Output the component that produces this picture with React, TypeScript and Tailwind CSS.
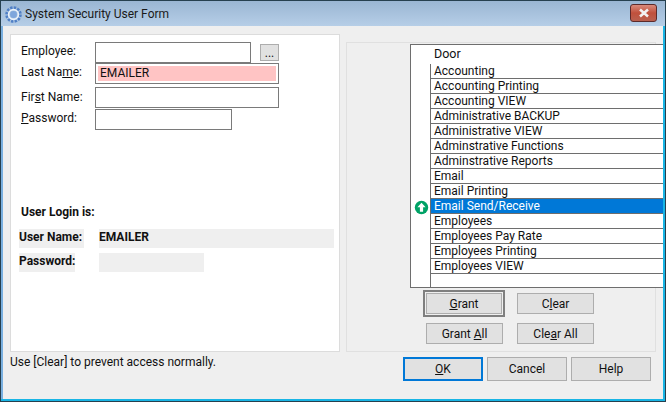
const doors = [
  "Accounting", "Accounting Printing", "Accounting VIEW", "Administrative BACKUP",
  "Administrative VIEW", "Adminstrative Functions", "Adminstrative Reports", "Email",
  "Email Printing", "Email Send/Receive", "Employees", "Employees Pay Rate",
  "Employees Printing", "Employees VIEW",
];

const Gear = () => (
  <svg width="17" height="17" viewBox="0 0 16 16">
    <circle cx="8" cy="8" r="6.3" fill="none" stroke="#4f7fc6" strokeWidth="3" strokeDasharray="2.2 1.1" />
    <circle cx="8" cy="8" r="4.6" fill="none" stroke="#eaf2fb" strokeWidth="1.5" />
    <circle cx="8" cy="8" r="3.2" fill="#7ea6dc" />
  </svg>
);

const Btn = ({ children, className }: { children: React.ReactNode; className: string }) => (
  <button className={"flex items-center justify-center bg-[#e1e1e1] text-[#111] " + className}>{children}</button>
);

export default function App() {
  return (
    <div className="w-[666px] h-[402px] flex flex-col overflow-hidden bg-[#b5cde6] border border-[#26404f] text-[12px] leading-[16px] text-[#111] font-['Roboto','Noto_Sans',sans-serif]">
      {/* title bar */}
      <div className="h-[25px] shrink-0 flex items-center pl-[4px] pt-[1px] bg-gradient-to-b from-[#9ab6d3] to-[#b6cee7]">
        <Gear />
        <span className="ml-[3px] text-[#1a1a1a]">System Security User Form</span>
        <div className="ml-auto mr-[8px] mb-[3px] w-[27px] h-[18px] rounded-[3px] border border-[#5c2a2a] bg-gradient-to-b from-[#d98a7c] via-[#c0503c] to-[#b9604f] flex items-center justify-center">
          <svg width="12" height="10" viewBox="0 0 12 10">
            <path d="M2 1.5 L10 8.5 M10 1.5 L2 8.5" stroke="#f2f2f2" strokeWidth="2.6" />
          </svg>
        </div>
      </div>

      {/* client area */}
      <div className="flex-1 min-h-0 border-l-2 border-r-2 border-l-[#7ab0e0] border-r-[#19b5e5] flex flex-col bg-[#efefef] pl-[7px] pt-[8px]">
        <div className="flex items-start">
          {/* left panel */}
          <div className="w-[330px] h-[318px] bg-white border border-[#dcdcdc] flex flex-col pl-[10px] pt-[7px] shrink-0">
            <div className="flex items-start">
              <span className="w-[74px] pt-[1px]">Employee:</span>
              <div className="w-[156px] h-[21px] border border-[#7a7a7a]" />
              <button className="ml-[9px] mt-[2px] w-[19px] h-[17px] bg-[#e1e1e1] border border-[#adadad] flex items-center justify-center leading-[12px]">...</button>
            </div>
            <div className="flex items-start">
              <span className="w-[74px] pt-[1px]">Last Na<u>m</u>e:</span>
              <div className="w-[184px] h-[21px] border border-[#7a7a7a] p-[2px] flex">
                <div className="flex-1 bg-[#ffc4c4] pl-[2px] leading-[15px]">EMAILER</div>
              </div>
            </div>
            <div className="flex items-start mt-[3px]">
              <span className="w-[74px] pt-[2px]">Fir<u>s</u>t Name:</span>
              <div className="w-[184px] h-[21px] border border-[#7a7a7a]" />
            </div>
            <div className="flex items-start mt-[1px]">
              <span className="w-[74px] pt-[1px]"><u>P</u>assword:</span>
              <div className="w-[137px] h-[21px] border border-[#7a7a7a]" />
            </div>
            <div className="mt-[74px] font-bold">User Login is:</div>
            <div className="flex -ml-[2px] mt-[9px] font-bold whitespace-nowrap">
              <div className="w-[65px] h-[19px] bg-[#efefef]">User Name:</div>
              <div className="ml-[15px] w-[235px] h-[19px] bg-[#efefef]">EMAILER</div>
            </div>
            <div className="flex -ml-[2px] mt-[5px] font-bold whitespace-nowrap">
              <div className="w-[56px] h-[19px] bg-[#efefef]">Password:</div>
              <div className="ml-[24px] w-[105px] h-[19px] bg-[#efefef]" />
            </div>
          </div>

          {/* right panel */}
          <div className="ml-[6px] mt-[8px] w-[310px] h-[310px] border border-[#e0e0e0] shrink-0 flex flex-col pl-[63px] pt-[1px]">
            <div className="w-[253px] h-[244px] shrink-0 bg-white border border-[#6e6e6e] border-r-0 flex">
              <div className="w-[19px] flex flex-col items-center pt-[148px] shrink-0 pl-[1px] bg-white">
                <svg width="15" height="15" viewBox="0 0 15 15" className="mt-[7px]">
                  <circle cx="7.5" cy="7.5" r="6.7" fill="#00a266" />
                  <path d="M7.5 2.8 L11.6 7.3 H9.1 V11.8 H5.9 V7.3 H3.4 Z" fill="#fff" />
                </svg>
              </div>
              <div className="flex-1 flex flex-col">
                <div className="h-[19px] shrink-0 pl-[4px] pt-[1px] bg-white text-[12.5px]">Door</div>
                <div className="flex-1 border-l border-[#6e6e6e]">
                  {doors.map((name) => (
                    <div
                      key={name}
                      className={
                        "h-[15px] pl-[3px] leading-[14px] border-b border-[#6e6e6e] " +
                        (name === "Email Send/Receive" ? "bg-[#0078d7] text-white" : "")
                      }
                    >
                      {name}
                    </div>
                  ))}
                </div>
              </div>
            </div>
            <div className="flex items-start mt-[2px] ml-[13px]">
              <div className="w-[82px] h-[27px] border-2 border-[#7f7f7f] p-[1px] flex">
                <Btn className="flex-1 border border-[#adadad]"><span><u>G</u>rant</span></Btn>
              </div>
              <Btn className="ml-[12px] mt-[3px] w-[77px] h-[21px] border border-[#adadad]"><span>C<u>l</u>ear</span></Btn>
            </div>
            <div className="flex mt-[6px] ml-[16px]">
              <Btn className="w-[77px] h-[21px] border border-[#adadad]"><span>Grant <u>A</u>ll</span></Btn>
              <Btn className="ml-[14px] w-[77px] h-[21px] border border-[#adadad]"><span>Cle<u>a</u>r All</span></Btn>
            </div>
          </div>
        </div>

        {/* footer */}
        <div className="flex items-start">
          <span className="mt-[2px]">Use [Clear] to prevent access normally.</span>
          <div className="ml-auto mr-[12px] mt-[5px] flex gap-[4px]">
            <Btn className="w-[80px] h-[24px] border-2 border-[#0078d7]"><span><u>O</u>K</span></Btn>
            <Btn className="w-[80px] h-[24px] border border-[#adadad]">Cancel</Btn>
            <Btn className="w-[80px] h-[24px] border border-[#adadad]">Help</Btn>
          </div>
        </div>
      </div>
      <div className="h-[2px] shrink-0 bg-[#19b5e5]" />
    </div>
  );
}
